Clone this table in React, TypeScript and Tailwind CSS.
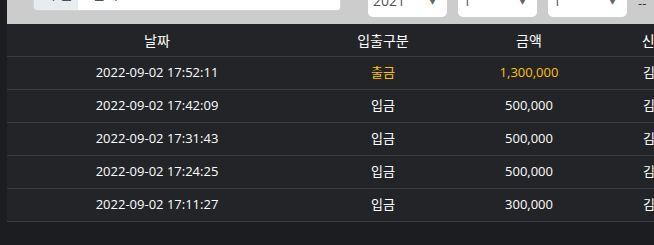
interface Row {
  date: string
  type: "입금" | "출금"
  amount: string
  name: string
}

const rows: Row[] = [
  { date: "2022-09-02 17:52:11", type: "출금", amount: "1,300,000", name: "김민수" },
  { date: "2022-09-02 17:42:09", type: "입금", amount: "500,000", name: "김민수" },
  { date: "2022-09-02 17:31:43", type: "입금", amount: "500,000", name: "김민수" },
  { date: "2022-09-02 17:24:25", type: "입금", amount: "500,000", name: "김민수" },
  { date: "2022-09-02 17:11:27", type: "입금", amount: "300,000", name: "김민수" },
]

function Select({ value }: { value: string }) {
  return (
    <div className="mb-[7px] flex h-[38px] w-[79px] shrink-0 items-end justify-between rounded-[5px] bg-white pb-[9px] pl-[5px] pr-[11px]">
      <span className="text-[14px] leading-none text-[#555]">{value}</span>
      <span className="mb-[3px] text-[7px] leading-none text-[#666]">▼</span>
    </div>
  )
}

export default function App() {
  return (
    <div
      className="flex h-[245px] w-[654px] overflow-hidden bg-[#1c1d21]"
      style={{ fontFamily: '"Open Sans", "Noto Sans CJK KR", sans-serif' }}
    >
      <div className="w-[7px] shrink-0" />
      <div className="flex min-w-0 flex-1 flex-col">
        {/* Filter bar */}
        <div className="flex h-[24px] shrink-0 items-end overflow-hidden bg-[#cccccc] pl-[26px]">
          <div className="mb-[13px] flex h-[38px] shrink-0 overflow-hidden rounded-[4px] border border-[#ced4da]">
            <div className="flex w-[44px] items-end bg-[#e9ecef] pb-[9px] pl-[13px] text-[14px] leading-none text-[#495057]">
              구분
            </div>
            <div className="flex w-[262px] items-end bg-white pb-[9px] pl-[14px] text-[14px] leading-none text-[#495057]">
              전체
            </div>
          </div>
          <div className="ml-[27px] flex items-end gap-[11px]">
            <Select value="2021" />
            <Select value="1" />
            <Select value="1" />
          </div>
          <span className="mb-[14px] ml-[11px] text-[13px] leading-none text-[#333]">--</span>
        </div>

        {/* Table */}
        <div className="overflow-hidden">
          <div className="w-[716px] bg-[#222428] text-[13px] text-white">
            <div className="grid h-[33px] grid-cols-[300px_152px_140px_124px] items-center border-b border-[#3b3d41] text-[14px]">
              <div className="text-center">날짜</div>
              <div className="text-center">입출구분</div>
              <div className="text-center">금액</div>
              <div className="text-center">신청자</div>
            </div>
            {rows.map((row, i) => (
              <div
                key={i}
                className="grid h-[33px] grid-cols-[300px_152px_140px_124px] items-center border-b border-[#3b3d41]"
              >
                <div className="text-center">{row.date}</div>
                <div className={`text-center ${row.type === "출금" ? "text-[#ffc107]" : ""}`}>{row.type}</div>
                <div className={`text-center ${row.type === "출금" ? "text-[#ffc107]" : ""}`}>{row.amount}</div>
                <div className="text-center">{row.name}</div>
              </div>
            ))}
          </div>
        </div>
      </div>
    </div>
  )
}
